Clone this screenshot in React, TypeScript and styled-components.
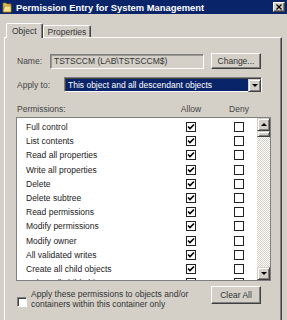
import styled, { createGlobalStyle } from "styled-components";

const GlobalStyle = createGlobalStyle`
  html, body {
    margin: 0;
    padding: 0;
    background: #d4d0c8;
  }
  body {
    font-family: "Liberation Sans", Arial, sans-serif;
    font-size: 8.5px;
    color: #222;
  }
`;

const Window = styled.div`
  width: 287px;
  height: 320px;
  overflow: hidden;
  background: #d4d0c8;
  display: flex;
  flex-direction: column;
`;

const TitleBar = styled.div`
  height: 14px;
  flex-shrink: 0;
  background: #0a246a;
  display: flex;
  align-items: center;
  padding: 0 2px;
`;

const TitleText = styled.span`
  flex: 1;
  margin-left: 4px;
  color: #fff;
  font-weight: bold;
  font-size: 9.4px;
  white-space: nowrap;
`;

const CloseButton = styled.div`
  width: 12px;
  height: 10px;
  box-sizing: border-box;
  background: #d4d0c8;
  border: 1px solid;
  border-color: #fff #404040 #404040 #fff;
  box-shadow: inset -1px -1px #808080;
  display: flex;
  align-items: center;
  justify-content: center;
`;

const Content = styled.div`
  flex: 1;
  min-height: 0;
  display: flex;
  flex-direction: column;
  padding: 8px 5px 0 4px;
`;

const TabStrip = styled.div`
  height: 15px;
  flex-shrink: 0;
  display: flex;
  align-items: flex-end;
  padding-left: 2px;
`;

const Tab = styled.div<{ $active?: boolean }>`
  position: relative;
  z-index: ${(p) => (p.$active ? 2 : 1)};
  height: ${(p) => (p.$active ? "15px" : "12px")};
  margin-bottom: ${(p) => (p.$active ? "-1px" : "0")};
  box-sizing: border-box;
  padding: ${(p) => (p.$active ? "2px 5px 0 5px" : "1px 4px 0 4px")};
  background: #d4d0c8;
  border-top: 1px solid #fff;
  border-left: 1px solid #fff;
  border-right: 1px solid #404040;
  box-shadow: inset -1px 0 #808080;
  border-radius: 2px 2px 0 0;
  color: #333;
  white-space: nowrap;
`;

const Panel = styled.div`
  flex: 1;
  display: flex;
  flex-direction: column;
  border-top: 1px solid #fff;
  border-left: 1px solid #fff;
  border-right: 1px solid #404040;
  box-shadow: inset -1px 0 #808080;
  padding: 0 0 0 11px;
`;

const FieldRow = styled.div<{ $top: number; $h: number }>`
  display: flex;
  align-items: center;
  height: ${(p) => p.$h}px;
  margin-top: ${(p) => p.$top}px;
`;

const Label = styled.span<{ $w: number }>`
  width: ${(p) => p.$w}px;
  padding-left: 1px;
  box-sizing: border-box;
  color: #444;
  white-space: nowrap;
`;

const TextBox = styled.div`
  width: 154px;
  height: 15px;
  box-sizing: border-box;
  border: 1px solid;
  border-color: #808080 #fff #fff #808080;
  box-shadow: inset 1px 1px #9a9790;
  padding-left: 3px;
  display: flex;
  align-items: center;
  color: #333;
  white-space: nowrap;
`;

const Button = styled.div<{ $h: number }>`
  width: 50px;
  height: ${(p) => p.$h}px;
  margin-left: auto;
  margin-right: 20px;
  box-sizing: border-box;
  border: 1px solid;
  border-color: #fff #404040 #404040 #fff;
  box-shadow: inset -1px -1px #808080;
  display: flex;
  align-items: center;
  justify-content: center;
  color: #333;
  flex-shrink: 0;
`;

const Dropdown = styled.div`
  width: 198px;
  height: 15px;
  box-sizing: border-box;
  border: 1px solid;
  border-color: #808080 #fff #fff #808080;
  box-shadow: inset 1px 1px #404040;
  padding: 1px 0 0 1px;
  display: flex;
`;

const Selected = styled.div`
  flex: 1;
  background: #0a246a;
  color: #fff;
  padding-left: 2px;
  display: flex;
  align-items: center;
  white-space: nowrap;
`;

const ArrowButton = styled.div<{ $size: number }>`
  width: ${(p) => p.$size}px;
  height: ${(p) => p.$size}px;
  flex-shrink: 0;
  box-sizing: border-box;
  background: #d4d0c8;
  border: 1px solid;
  border-color: #d4d0c8 #404040 #404040 #d4d0c8;
  box-shadow: inset 1px 1px #fff, inset -1px -1px #808080;
  display: flex;
  align-items: center;
  justify-content: center;
`;

const Arrow = styled.span<{ $up?: boolean }>`
  width: 0;
  height: 0;
  border-left: 3px solid transparent;
  border-right: 3px solid transparent;
  ${(p) => (p.$up ? "border-bottom: 3px solid #000;" : "border-top: 3px solid #000;")}
`;

const Columns = styled.div`
  display: grid;
  grid-template-columns: 1fr 36px 36px;
  column-gap: 12px;
  align-items: center;
`;

const HeaderRow = styled(Columns)`
  width: 240px;
  height: 10px;
  margin: 12px 0 0 1px;
  color: #444;
`;

const HeaderCell = styled.span<{ $center?: boolean }>`
  text-align: ${(p) => (p.$center ? "center" : "left")};
  white-space: nowrap;
`;

const List = styled.div`
  width: 255px;
  height: 164px;
  margin-top: 3px;
  box-sizing: border-box;
  border: 1px solid #808080;
  background: #fff;
  display: flex;
`;

const Rows = styled.div`
  flex: 1;
  overflow: hidden;
  padding-top: 2px;
`;

const Row = styled(Columns)`
  height: 14.2px;
  padding-left: 9px;
  color: #222;
  white-space: nowrap;
`;

const Cell = styled.div`
  display: flex;
  justify-content: center;
`;

const ListCheck = styled.div`
  width: 10px;
  height: 10px;
  box-sizing: border-box;
  border: 1px solid #222;
  background: #fff;
  display: flex;
  align-items: center;
  justify-content: center;
`;

const Scrollbar = styled.div`
  width: 13px;
  display: flex;
  flex-direction: column;
`;

const Thumb = styled.div`
  height: 6px;
  box-sizing: border-box;
  background: #d4d0c8;
  border: 1px solid;
  border-color: #d4d0c8 #404040 #404040 #d4d0c8;
  box-shadow: inset 1px 1px #fff, inset -1px -1px #808080;
`;

const Track = styled.div`
  flex: 1;
  background-image: repeating-conic-gradient(#fff 0 25%, #d4d0c8 0 50%);
  background-size: 2px 2px;
`;

const BottomRow = styled.div`
  display: flex;
  align-items: flex-start;
  margin-top: 5px;
`;

const Check3D = styled.div`
  width: 10px;
  height: 10px;
  margin: 11px 4px 0 1px;
  flex-shrink: 0;
  box-sizing: border-box;
  background: #fff;
  border: 1px solid;
  border-color: #808080 #fff #fff #808080;
  box-shadow: inset 1px 1px #404040;
`;

const CheckText = styled.div`
  width: 180px;
  margin-top: 4px;
  line-height: 9.5px;
  color: #333;
`;

const permissions = [
  "Full control",
  "List contents",
  "Read all properties",
  "Write all properties",
  "Delete",
  "Delete subtree",
  "Read permissions",
  "Modify permissions",
  "Modify owner",
  "All validated writes",
  "Create all child objects",
  "Delete all child objects",
];

function CheckMark() {
  return (
    <svg width="8" height="8" viewBox="0 0 8 8">
      <path d="M1 3.5 L3 5.5 L7 1.5" stroke="#000" strokeWidth="1.6" fill="none" />
    </svg>
  );
}

function FolderIcon() {
  return (
    <svg width="10" height="11" viewBox="0 0 10 11">
      <path d="M1 1 L4 1 L5 2 L9 2 L9 10 L1 10 Z" fill="#e8c65a" stroke="#8a6d1c" strokeWidth="0.8" />
      <path d="M2.5 4 L9 4 L9 10 L1 10 Z" fill="#f7e08a" stroke="#8a6d1c" strokeWidth="0.6" />
    </svg>
  );
}

export default function App() {
  return (
    <>
      <GlobalStyle />
      <Window>
        <TitleBar>
          <FolderIcon />
          <TitleText>Permission Entry for System Management</TitleText>
          <CloseButton>
            <svg width="6" height="6" viewBox="0 0 6 6">
              <path d="M0.5 0.5 L5.5 5.5 M5.5 0.5 L0.5 5.5" stroke="#000" strokeWidth="1.3" />
            </svg>
          </CloseButton>
        </TitleBar>
        <Content>
          <TabStrip>
            <Tab $active>Object</Tab>
            <Tab>Properties</Tab>
          </TabStrip>
          <Panel>
            <FieldRow $top={15} $h={16}>
              <Label $w={34}>Name:</Label>
              <TextBox>TSTSCCM (LAB\TSTSCCM$)</TextBox>
              <Button $h={16}>Change...</Button>
            </FieldRow>
            <FieldRow $top={8} $h={15}>
              <Label $w={48}>Apply to:</Label>
              <Dropdown>
                <Selected>This object and all descendant objects</Selected>
                <ArrowButton $size={13}>
                  <Arrow />
                </ArrowButton>
              </Dropdown>
            </FieldRow>
            <HeaderRow>
              <HeaderCell>Permissions:</HeaderCell>
              <HeaderCell $center>Allow</HeaderCell>
              <HeaderCell $center>Deny</HeaderCell>
            </HeaderRow>
            <List>
              <Rows>
                {permissions.map((name) => (
                  <Row key={name}>
                    <span>{name}</span>
                    <Cell>
                      <ListCheck>
                        <CheckMark />
                      </ListCheck>
                    </Cell>
                    <Cell>
                      <ListCheck />
                    </Cell>
                  </Row>
                ))}
              </Rows>
              <Scrollbar>
                <ArrowButton $size={13}>
                  <Arrow $up />
                </ArrowButton>
                <Thumb />
                <Track />
                <ArrowButton $size={13}>
                  <Arrow />
                </ArrowButton>
              </Scrollbar>
            </List>
            <BottomRow>
              <Check3D />
              <CheckText>
                Apply these permissions to objects and/or
                <br />
                containers within this container only
              </CheckText>
              <Button $h={18}>Clear All</Button>
            </BottomRow>
          </Panel>
        </Content>
      </Window>
    </>
  );
}
